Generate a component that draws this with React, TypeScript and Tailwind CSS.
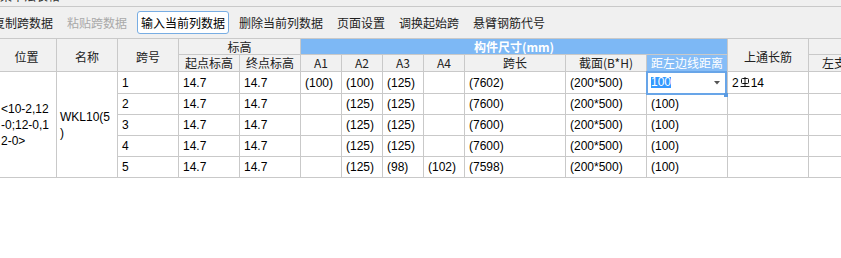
import React from "react";

const UI = "font-['Noto_Sans_CJK_SC','Liberation_Sans',sans-serif]";
const DATA = "font-['Liberation_Sans','Noto_Sans_CJK_SC',sans-serif]";

function Toolbar() {
  const items: { t: string; disabled?: boolean; active?: boolean }[] = [
    { t: "复制跨数据" },
    { t: "粘贴跨数据", disabled: true },
    { t: "输入当前列数据", active: true },
    { t: "删除当前列数据" },
    { t: "页面设置" },
    { t: "调换起始跨" },
    { t: "悬臂钢筋代号" },
  ];
  return (
    <div className="h-[32px] bg-[#f0f0f0] border-b border-[#c9c9c9] flex items-center overflow-hidden">
      <div className="-ml-[11px] flex items-center gap-[6px]">
        {items.map((it) => (
          <div
            key={it.t}
            className={
              "h-[23px] px-[3px] flex items-center text-[12px] leading-none whitespace-nowrap border rounded-[3px] " +
              UI +
              " " +
              (it.active
                ? "border-[#78ade3] bg-white text-[#1e1e1e]"
                : "border-transparent ") +
              (it.disabled ? "text-[#a9a9a9]" : "text-[#1e1e1e]")
            }
          >
            {it.t}
          </div>
        ))}
      </div>
    </div>
  );
}

function Hd({
  children,
  className = "",
}: {
  children?: React.ReactNode;
  className?: string;
}) {
  return (
    <div
      className={
        "flex items-center justify-center text-[12px] leading-none whitespace-nowrap overflow-hidden " +
        UI +
        " " +
        className
      }
    >
      {children}
    </div>
  );
}

function Td({
  children,
  className = "",
}: {
  children?: React.ReactNode;
  className?: string;
}) {
  return (
    <div
      className={
        "bg-white flex items-center pl-[4px] text-[12px] leading-none text-black whitespace-nowrap " +
        DATA +
        " " +
        className
      }
    >
      {children}
    </div>
  );
}

function RebarGlyph() {
  return (
    <svg width="10" height="11" viewBox="0 0 10 11" className="mx-[1px] mb-[1px]">
      <rect x="1.5" y="1.5" width="7" height="5" rx="1" fill="none" stroke="#111" strokeWidth="1" />
      <line x1="5" y1="0" x2="5" y2="9.5" stroke="#111" strokeWidth="1" />
      <line x1="0.5" y1="9.5" x2="9.5" y2="9.5" stroke="#111" strokeWidth="1" />
    </svg>
  );
}

function ActiveCell() {
  return (
    <div className={"relative bg-white flex items-center text-[12px] " + DATA}>
      <div className="absolute -left-px right-0 -top-px -bottom-[2px] border-2 border-[#68a5e8] z-10 pointer-events-none">
        <div className="absolute -right-[3px] -bottom-[4px] w-[4px] h-[4px] bg-[#5b9be2]" />
      </div>
      <span className="ml-[4px] bg-[#3399ff] text-white leading-[11px] h-[11px]">100</span>
      <svg width="6" height="4" viewBox="0 0 6 4" className="ml-auto mr-[7px]">
        <path d="M0 0 L6 0 L3 3.5 Z" fill="#555" />
      </svg>
    </div>
  );
}

export default function App() {
  const hd = "bg-[#f1f1f1] text-[#222]";
  const rows: string[][] = [
    ["2", "14.7", "14.7", "", "(125)", "(125)", "", "(7600)", "(200*500)", "(100)", "", ""],
    ["3", "14.7", "14.7", "", "(125)", "(125)", "", "(7600)", "(200*500)", "(100)", "", ""],
    ["4", "14.7", "14.7", "", "(125)", "(125)", "", "(7600)", "(200*500)", "(100)", "", ""],
    ["5", "14.7", "14.7", "", "(125)", "(98)", "(102)", "(7598)", "(200*500)", "(100)", "", ""],
  ];
  return (
    <div className="w-[841px] h-[258px] bg-white overflow-hidden">
      <div className="h-[7px] bg-[#f0f0f0] border-b border-[#c9c9c9] overflow-hidden">
        <div className={"-mt-[13px] text-[12px] leading-[17px] text-[#333] " + UI}>梁平法表格</div>
      </div>
      <Toolbar />
      <div className="w-[841px] overflow-hidden">
        <div className="-ml-[3px] w-max grid grid-cols-[59px_60px_60px_60px_60px_40px_40px_40px_40px_100px_80px_80px_80px_86px] grid-rows-[15px_16px_21px_20px_20px_20px_20px] gap-px bg-[#c9c9c9] pb-px">
          {/* header row 1 */}
          <Hd className={hd + " row-span-2 pt-[3px]"}>位置</Hd>
          <Hd className={hd + " row-span-2 pt-[3px]"}>名称</Hd>
          <Hd className={hd + " row-span-2 pt-[3px]"}>跨号</Hd>
          <Hd className={hd + " col-span-2"}>标高</Hd>
          <Hd className="col-span-7 bg-[#7db8f5] text-white font-bold">构件尺寸(mm)</Hd>
          <Hd className={hd + " row-span-2 pt-[3px]"}>上通长筋</Hd>
          <Hd className={hd}></Hd>
          {/* header row 2 */}
          <Hd className={hd}>起点标高</Hd>
          <Hd className={hd}>终点标高</Hd>
          <Hd className={hd}>A1</Hd>
          <Hd className={hd}>A2</Hd>
          <Hd className={hd}>A3</Hd>
          <Hd className={hd}>A4</Hd>
          <Hd className={hd}>跨长</Hd>
          <Hd className={hd}>截面(B*H)</Hd>
          <Hd className="bg-[#86bdf7] text-white">距左边线距离</Hd>
          <Hd className={hd}>左支座钢筋</Hd>

          {/* data */}
          <div className={"row-span-5 bg-white flex flex-col justify-center pl-[4px] text-[12px] leading-[16px] text-black " + DATA}>
            <span>&lt;10-2,12</span>
            <span>-0;12-0,1</span>
            <span>2-0&gt;</span>
          </div>
          <div className={"row-span-5 bg-white flex flex-col justify-center pl-[3px] text-[12px] leading-[16px] text-black " + DATA}>
            <span>WKL10(5</span>
            <span>)</span>
          </div>
          <Td>1</Td>
          <Td>14.7</Td>
          <Td>14.7</Td>
          <Td>(100)</Td>
          <Td>(100)</Td>
          <Td>(125)</Td>
          <Td></Td>
          <Td>(7602)</Td>
          <Td>(200*500)</Td>
          <ActiveCell />
          <Td className="pl-[4px]">
            <span>2</span>
            <RebarGlyph />
            <span>14</span>
          </Td>
          <Td></Td>
          {rows.map((r, i) =>
            r.map((c, j) => <Td key={i + "-" + j}>{c}</Td>)
          )}
        </div>
      </div>
    </div>
  );
}
